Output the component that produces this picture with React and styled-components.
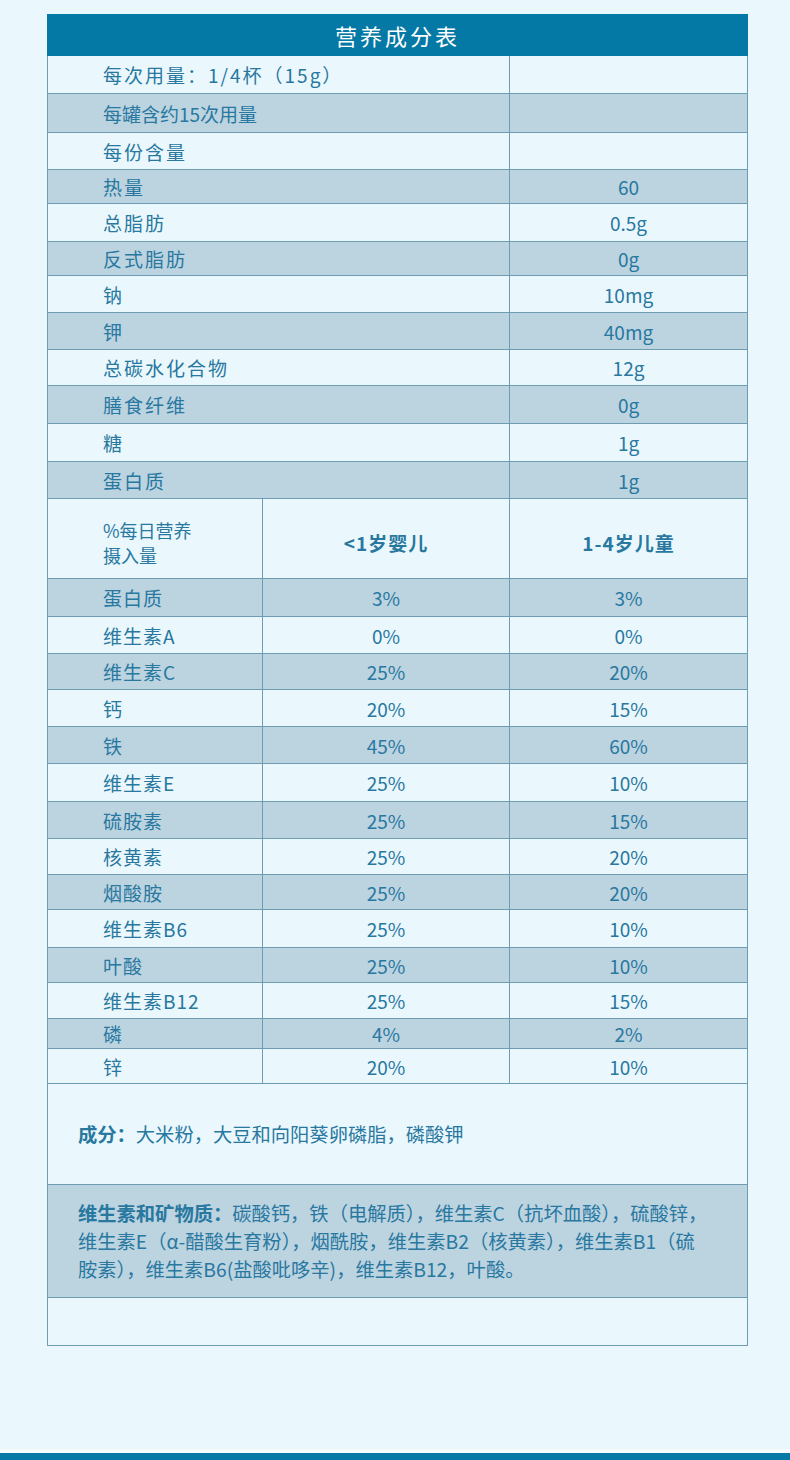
import React from 'react';
import styled, { createGlobalStyle } from 'styled-components';

const colors = {
  page: '#eaf7fd',
  teal: '#0579a5',
  light: '#eaf7fd',
  dark: '#bcd3e0',
  border: '#6e9cb3',
  text: '#2878a0'
};

const GlobalStyle = createGlobalStyle`
  html, body {
    margin: 0;
    padding: 0;
    background: ${colors.page};
  }
  body {
    font-family: "Noto Sans CJK SC", "Noto Sans", sans-serif;
    color: ${colors.text};
  }
`;

const Page = styled.div`
  width: 790px;
  min-height: 1460px;
  display: flex;
  flex-direction: column;
  background: ${colors.page};
`;

const TableWrap = styled.div`
  padding: 14px 0 0 47px;
`;

const Table = styled.table`
  width: 700px;
  border-collapse: collapse;
  table-layout: fixed;
  font-size: 19px;
  line-height: 1.2;
  color: ${colors.text};
`;

const TitleCell = styled.th`
  height: 40px;
  padding: 0;
  background: ${colors.teal};
  color: #fff;
  font-size: 22px;
  font-weight: 400;
  letter-spacing: 3px;
  border: 1px solid ${colors.teal};
`;

const Row = styled.tr`
  background: ${(p) => (p.$shade ? colors.dark : colors.light)};
`;

// td height is content-box here: row = height + padding-top + 1px border
const Cell = styled.td`
  height: ${(p) => p.$h - 1 - (p.$top ?? 2)}px;
  padding: ${(p) => p.$top ?? 2}px 0 0 ${(p) => (p.$center ? 0 : 55)}px;
  border: 1px solid ${colors.border};
  text-align: ${(p) => (p.$center ? 'center' : 'left')};
  letter-spacing: ${(p) => p.$spacing ?? 0}px;
  vertical-align: middle;
`;

const HeadLabel = styled.div`
  font-size: 18px;
  line-height: 25px;
`;

const AgeHead = styled.span`
  font-size: 19px;
  font-weight: 700;
  letter-spacing: 1px;
`;

const NoteCell = styled.td`
  height: ${(p) => p.$h - 1}px;
  padding: 0 20px 0 30px;
  border: 1px solid ${colors.border};
  font-size: 19.3px;
  line-height: 28px;
  vertical-align: middle;
`;

const Strong = styled.b`
  font-weight: 700;
`;

const BottomBar = styled.div`
  margin-top: auto;
  height: 7px;
  background: ${colors.teal};
  border-top: 4px solid #f3fbfe;
`;

const servingRows = [
  { label: '每次用量：1/4杯（15g）', value: '', h: 38, spacing: 2 },
  { label: '每罐含约15次用量', value: '', h: 39, spacing: 0 },
  { label: '每份含量', value: '', h: 37, spacing: 2 },
  { label: '热量', value: '60', h: 34 },
  { label: '总脂肪', value: '0.5g', h: 38 },
  { label: '反式脂肪', value: '0g', h: 34 },
  { label: '钠', value: '10mg', h: 37 },
  { label: '钾', value: '40mg', h: 37 },
  { label: '总碳水化合物', value: '12g', h: 36 },
  { label: '膳食纤维', value: '0g', h: 38 },
  { label: '糖', value: '1g', h: 38 },
  { label: '蛋白质', value: '1g', h: 37 }
];

const dailyRows = [
  { label: '蛋白质', infant: '3%', child: '3%', h: 38 },
  { label: '维生素A', infant: '0%', child: '0%', h: 37 },
  { label: '维生素C', infant: '25%', child: '20%', h: 36 },
  { label: '钙', infant: '20%', child: '15%', h: 37 },
  { label: '铁', infant: '45%', child: '60%', h: 37 },
  { label: '维生素E', infant: '25%', child: '10%', h: 38 },
  { label: '硫胺素', infant: '25%', child: '15%', h: 37 },
  { label: '核黄素', infant: '25%', child: '20%', h: 36 },
  { label: '烟酸胺', infant: '25%', child: '20%', h: 35 },
  { label: '维生素B6', infant: '25%', child: '10%', h: 38 },
  { label: '叶酸', infant: '25%', child: '10%', h: 35 },
  { label: '维生素B12', infant: '25%', child: '15%', h: 36 },
  { label: '磷', infant: '4%', child: '2%', h: 30 },
  { label: '锌', infant: '20%', child: '10%', h: 35 }
];

export default function App() {
  return (
    <Page>
      <GlobalStyle />
      <TableWrap>
        <Table>
          <colgroup>
            <col style={{ width: 215 }} />
            <col style={{ width: 247 }} />
            <col style={{ width: 238 }} />
          </colgroup>
          <thead>
            <tr>
              <TitleCell colSpan={3}>营养成分表</TitleCell>
            </tr>
          </thead>
          <tbody>
            {servingRows.map((row, i) => (
              <Row key={row.label} $shade={i % 2 === 1}>
                <Cell colSpan={2} $h={row.h} $spacing={row.spacing ?? 2}>
                  {row.label}
                </Cell>
                <Cell $h={row.h} $center>
                  {row.value}
                </Cell>
              </Row>
            ))}
            <Row>
              <Cell $h={80} $top={8}>
                <HeadLabel>
                  %每日营养
                  <br />
                  摄入量
                </HeadLabel>
              </Cell>
              <Cell $h={80} $top={10} $center>
                <AgeHead>&lt;1岁婴儿</AgeHead>
              </Cell>
              <Cell $h={80} $top={10} $center>
                <AgeHead>1-4岁儿童</AgeHead>
              </Cell>
            </Row>
            {dailyRows.map((row, i) => (
              <Row key={row.label + i} $shade={i % 2 === 0}>
                <Cell $h={row.h} $spacing={1}>
                  {row.label}
                </Cell>
                <Cell $h={row.h} $center>
                  {row.infant}
                </Cell>
                <Cell $h={row.h} $center>
                  {row.child}
                </Cell>
              </Row>
            ))}
            <Row>
              <NoteCell colSpan={3} $h={101}>
                <Strong>成分：</Strong>大米粉，大豆和向阳葵卵磷脂，磷酸钾
              </NoteCell>
            </Row>
            <Row $shade>
              <NoteCell colSpan={3} $h={113}>
                <Strong>维生素和矿物质：</Strong>碳酸钙，铁（电解质），维生素C（抗坏血酸），硫酸锌，
                <br />
                维生素E（α-醋酸生育粉），烟酰胺，维生素B2（核黄素），维生素B1（硫
                <br />
                胺素），维生素B6(盐酸吡哆辛)，维生素B12，叶酸。
              </NoteCell>
            </Row>
            <Row>
              <NoteCell colSpan={3} $h={48} />
            </Row>
          </tbody>
        </Table>
      </TableWrap>
      <BottomBar />
    </Page>
  );
}
